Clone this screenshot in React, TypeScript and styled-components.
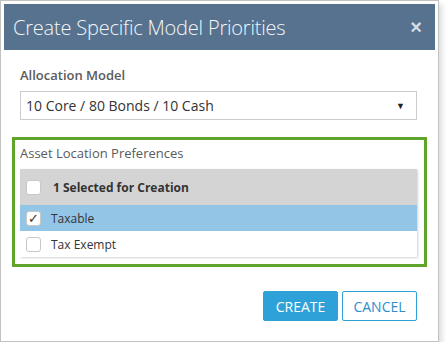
import React, { useState } from "react"
import styled, { createGlobalStyle } from "styled-components"

const GlobalStyle = createGlobalStyle`
  html, body {
    margin: 0;
    padding: 0;
    background: #ffffff;
  }
  body {
    font-family: "Open Sans", "Noto Sans", sans-serif;
  }
`

const Frame = styled.div`
  width: 431px;
  height: 334px;
  border: 1px solid #c2c2c2;
  padding: 3px;
  background: #ffffff;
  box-shadow: 3px 4px 6px rgba(0, 0, 0, 0.14);
  display: flex;
  flex-direction: column;
`

const Header = styled.div`
  height: 46px;
  background: #56728f;
  display: flex;
  align-items: center;
  justify-content: space-between;
  padding: 0 13px 0 9px;
`

const Title = styled.h1`
  margin: 0;
  font-size: 20px;
  font-weight: 300;
  color: #f4f6f8;
  letter-spacing: -0.2px;
`

const Close = styled.button`
  border: none;
  background: none;
  color: #d5dce3;
  font-size: 20px;
  font-weight: 700;
  padding: 0;
  line-height: 1;
  cursor: pointer;
`

const Body = styled.div`
  flex: 1;
  display: flex;
  flex-direction: column;
  padding: 16px 8px 0 8px;
`

const Label = styled.div<{ $indent?: number; $light?: boolean }>`
  font-size: 13px;
  font-weight: ${(p) => (p.$light ? 400 : 600)};
  color: #5a5a5a;
  padding-left: ${(p) => p.$indent ?? 8}px;
  margin-bottom: 7px;
`

const Select = styled.div`
  margin: 0 10px 0 8px;
  height: 27px;
  border: 1px solid #cccccc;
  display: flex;
  align-items: center;
  justify-content: space-between;
  padding: 0 11px 0 5px;
  font-size: 14px;
  color: #333333;
`

const Caret = styled.span`
  font-size: 9px;
  color: #222222;
`

const Group = styled.div`
  margin-top: 17px;
  border: 3px solid #5fa52c;
  padding: 4px 7px 7px 5px;
`

const Grid = styled.div`
  box-shadow: 1px 1px 2px rgba(0, 0, 0, 0.18);
  margin-top: 6px;
`

const Row = styled.div<{ $kind: "head" | "selected" | "plain" }>`
  display: flex;
  align-items: center;
  gap: ${(p) => (p.$kind === "head" ? 12 : 10)}px;
  padding-left: 6px;
  height: ${(p) => (p.$kind === "head" ? 36 : 26)}px;
  background: ${(p) =>
    p.$kind === "head" ? "#d4d4d4" : p.$kind === "selected" ? "#93c5e7" : "#ffffff"};
  font-size: 12px;
  font-weight: ${(p) => (p.$kind === "head" ? 700 : 400)};
  color: #333333;
`

const Box = styled.span`
  width: 13px;
  height: 13px;
  border: 1px solid #c8c8c8;
  border-radius: 3px;
  background: #ffffff;
  display: inline-flex;
  align-items: center;
  justify-content: center;
  color: #333333;
  font-size: 13px;
  line-height: 1;
`

const Footer = styled.div`
  margin-top: auto;
  display: flex;
  justify-content: flex-end;
  gap: 4px;
  padding: 0 10px 17px 0;
`

const Button = styled.button<{ $primary?: boolean }>`
  height: 30px;
  min-width: 75px;
  padding: 0 10px;
  border: 1px solid #2ea1d8;
  border-radius: 2px;
  background: ${(p) => (p.$primary ? "#2ea1d8" : "#ffffff")};
  color: ${(p) => (p.$primary ? "#ffffff" : "#2e8fc9")};
  font-family: inherit;
  font-size: 14px;
  cursor: pointer;
`

const prefs = ["Taxable", "Tax Exempt"]

const App: React.FC = () => {
  const [checked, setChecked] = useState<string[]>(["Taxable"])

  const toggle = (name: string) => {
    if (checked.includes(name)) {
      setChecked(checked.filter((c) => c !== name))
    } else {
      setChecked([...checked, name])
    }
  }

  return (
    <>
      <GlobalStyle />
      <Frame>
        <Header>
          <Title>Create Specific Model Priorities</Title>
          <Close>×</Close>
        </Header>
        <Body>
          <Label>Allocation Model</Label>
          <Select>
            10 Core / 80 Bonds / 10 Cash
            <Caret>▼</Caret>
          </Select>
          <Group>
            <Label $indent={0} $light>
              Asset Location Preferences
            </Label>
            <Grid>
              <Row $kind="head">
                <Box />
                {checked.length} Selected for Creation
              </Row>
              {prefs.map((p) => (
                <Row
                  key={p}
                  $kind={checked.includes(p) ? "selected" : "plain"}
                  onClick={() => toggle(p)}
                >
                  <Box>{checked.includes(p) ? "✓" : ""}</Box>
                  {p}
                </Row>
              ))}
            </Grid>
          </Group>
          <Footer>
            <Button $primary>CREATE</Button>
            <Button>CANCEL</Button>
          </Footer>
        </Body>
      </Frame>
    </>
  )
}

export default App
